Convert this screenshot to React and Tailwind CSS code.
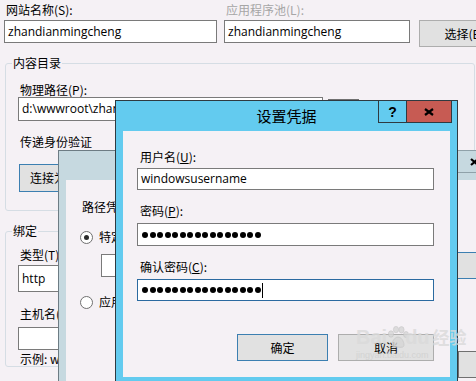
import React from "react";

const Field = ({ className = "", children }) => (
  <div
    className={`flex items-center border bg-white pl-[3px] font-['Open_Sans','Noto_Sans_CJK_SC',sans-serif] text-[12px] ${className}`}
  >
    {children}
  </div>
);

const Dots = () => (
  <div className="flex gap-[1.5px]">
    {Array.from({ length: 16 }).map((_, i) => (
      <span key={i} className="block h-[6px] w-[6px] rounded-full bg-black" />
    ))}
  </div>
);

const Radio = ({ checked }) => (
  <span className="flex h-[13px] w-[13px] shrink-0 items-center justify-center rounded-full border border-[#707070] bg-white">
    {checked && <span className="block h-[5px] w-[5px] rounded-full bg-[#2b2b2b]" />}
  </span>
);

const Button = ({ className = "", children }) => (
  <div
    className={`flex shrink-0 items-center justify-center border bg-[#e1e1e1] ${className}`}
  >
    {children}
  </div>
);

const Paw = () => (
  <svg width="22" height="22" viewBox="0 0 22 22" className="shrink-0">
    <g fill="#d6d6d6" stroke="#bdbdbd" strokeWidth="0.6">
      <ellipse cx="4" cy="8" rx="2.6" ry="3.2" />
      <ellipse cx="9" cy="3.6" rx="2.6" ry="3.2" />
      <ellipse cx="14.5" cy="3.8" rx="2.6" ry="3.2" />
      <ellipse cx="19" cy="8.5" rx="2.5" ry="3" />
      <path d="M5 19c0-4 3-8 6-8s6 4 6 8c0 2-2 3-6 2c-4 1-6 0-6-2z" />
    </g>
  </svg>
);

export default function App() {
  return (
    <div className="relative h-[381px] w-[476px] overflow-hidden bg-[#f5f1f5] font-['Noto_Sans_CJK_SC','Noto_Sans',sans-serif] text-[12px] leading-[14px] text-black">
      {/* 添加网站 */}
      <div className="pl-[4px] pt-[3px]">
        <div className="flex items-start">
          <div className="w-[213px] shrink-0">
            <div className="h-[17px] pl-[2px]">网站名称(S):</div>
            <Field className="h-[23px] border-[#7a7a7a]">zhandianmingcheng</Field>
          </div>
          <div className="ml-[7px] w-[186px] shrink-0">
            <div className="h-[17px] pl-[2px] text-[#a6a6a6]">应用程序池(L):</div>
            <Field className="h-[23px] border-[#7a7a7a]">zhandianmingcheng</Field>
          </div>
          <Button className="ml-[9px] mt-[17px] h-[27px] w-[100px] border-[#adadad]">选择(E)...</Button>
        </div>

        <fieldset className="ml-[1px] mt-[9px] w-[470px] rounded-[3px] border border-[#d5dde4]">
          <legend className="ml-[6px] px-[1px]">内容目录</legend>
          <div className="pb-[18px] pl-[12px]">
            <div className="mt-[13px] pl-[2px]">物理路径(P):</div>
            <div className="flex items-start">
              <Field className="h-[24px] w-[305px] border-[#7a7a7a]">d:\wwwroot\zhandianmingcheng</Field>
              <Button className="ml-[5px] mt-[2px] h-[24px] w-[31px] border-[#707070]">...</Button>
            </div>
            <div className="mt-[12px] pl-[2px]">传递身份验证</div>
            <Button className="ml-[1px] mt-[15px] h-[28px] w-[90px] justify-start border-[#3c7fb1] pl-[10px]">连接为(C)...</Button>
          </div>
        </fieldset>

        <fieldset className="ml-[1px] mt-[13px] w-[470px] rounded-[3px] border border-[#d5dde4]">
          <legend className="ml-[6px] px-[1px]">绑定</legend>
          <div className="pl-[12px]">
            <div className="mt-[10px] pl-[2px]">类型(T):</div>
            <Field className="mt-[3px] h-[27px] w-[120px] border-[#7a7a7a]">http</Field>
            <div className="mt-[15px] pl-[2px]">主机名(H):</div>
            <Field className="mt-[6px] h-[23px] w-[300px] border-[#7a7a7a]" />
            <div className="mt-[2px] pl-[2px]">示例: www.contoso.com 或 marketing.contoso.com</div>
          </div>
        </fieldset>
      </div>

      {/* 连接为 */}
      <div className="absolute left-[58px] top-[150px] h-[240px] w-[480px] border border-[#6d7c84] bg-[#c6d9e0] pl-[7px] pt-[29px]">
        <div className="absolute left-[392px] top-[-1px] flex h-[23px] w-[46px] items-center justify-center border border-[#8fa1a9]">
          <svg width="9" height="8" viewBox="0 0 9 8">
            <path d="M1 1l7 6M8 1L1 7" stroke="#000" strokeWidth="2.2" />
          </svg>
        </div>
        <div className="h-full bg-[#f5f1f5] pl-[14px] pt-[20px]">
          <div className="ml-[2px]">路径凭据:</div>
          <div className="mt-[16px] flex items-center">
            <Radio checked />
            <span className="ml-[6px]">特定用户(S):</span>
          </div>
          <div className="mt-[8px] flex h-[27px] items-center">
            <Field className="ml-[21px] h-[23px] w-[345px] shrink-0 border-[#7a7a7a]" />
            <Button className="ml-[11px] h-[27px] w-[110px] border-[#3c7fb1]" />
          </div>
          <div className="mt-[16px] flex items-center">
            <Radio />
            <span className="ml-[6px]">应用程序用户(通过身份验证)(A)</span>
          </div>
          <div className="mt-[42px] flex">
            <Button className="ml-[378px] h-[27px] w-[90px] border-[#707070]" />
          </div>
        </div>
      </div>

      {/* 设置凭据 */}
      <div className="absolute left-[115px] top-[100px] flex h-[300px] w-[343px] flex-col border border-[#2f3a40] bg-[#63cbef]">
        <div className="flex h-[30px] shrink-0 items-center justify-center text-[15px]">设置凭据</div>
        <div className="absolute left-[262px] top-[-1px] flex h-[23px] w-[29px] items-center justify-center border border-[#2f3a40] font-['Liberation_Sans',sans-serif] text-[14px] font-bold">
          ?
        </div>
        <div className="absolute left-[290px] top-[-1px] flex h-[23px] w-[46px] items-center justify-center border border-[#2f3a40] bg-[#c75b53]">
          <svg width="10" height="8" viewBox="0 0 10 8">
            <path d="M1 1l8 6M9 1L1 7" stroke="#000" strokeWidth="2.2" />
          </svg>
        </div>
        <div className="mx-[7px] h-[246px] shrink-0 bg-[#f5f1f5] pt-[19px]">
          <div className="pl-[17px]">
            用户名(<span className="underline">U</span>):
          </div>
          <Field className="ml-[14px] mt-[4px] h-[22px] w-[297px] border-[#7a7a7a]">windowsusername</Field>
          <div className="mt-[14px] pl-[17px]">
            密码(<span className="underline">P</span>):
          </div>
          <Field className="ml-[14px] mt-[5px] h-[23px] w-[297px] border-[#7a7a7a] pl-[4px]">
            <Dots />
          </Field>
          <div className="mt-[14px] pl-[17px]">
            确认密码(<span className="underline">C</span>):
          </div>
          <Field className="ml-[14px] mt-[5px] h-[22px] w-[297px] border-[#2b6aa0] pl-[4px]">
            <Dots />
            <span className="ml-[1px] block h-[15px] w-[1px] bg-black" />
          </Field>
          <div className="mt-[33px] flex">
            <Button className="ml-[114px] h-[27px] w-[91px] border-[#3c7fb1]">确定</Button>
            <Button className="ml-[10px] h-[27px] w-[96px] border-[#adadad]">取消</Button>
          </div>
        </div>
      </div>

      {/* watermark */}
      <div className="pointer-events-none absolute left-[356px] top-[326px] flex flex-col items-start opacity-80">
        <div className="flex items-center font-['Liberation_Sans',sans-serif] text-[20px] font-bold leading-[22px] text-[#dadada]">
          <span>Bai</span>
          <Paw />
          <span className="-ml-[4px]">du</span>
          <span className="ml-[3px] font-['Noto_Sans_CJK_SC',sans-serif] text-[17px]">经验</span>
        </div>
        <div className="mt-[2px] font-['Liberation_Sans',sans-serif] text-[9px] leading-[10px] text-[#d0d0d0]">
          jingyan.baidu.com
        </div>
      </div>
    </div>
  );
}
